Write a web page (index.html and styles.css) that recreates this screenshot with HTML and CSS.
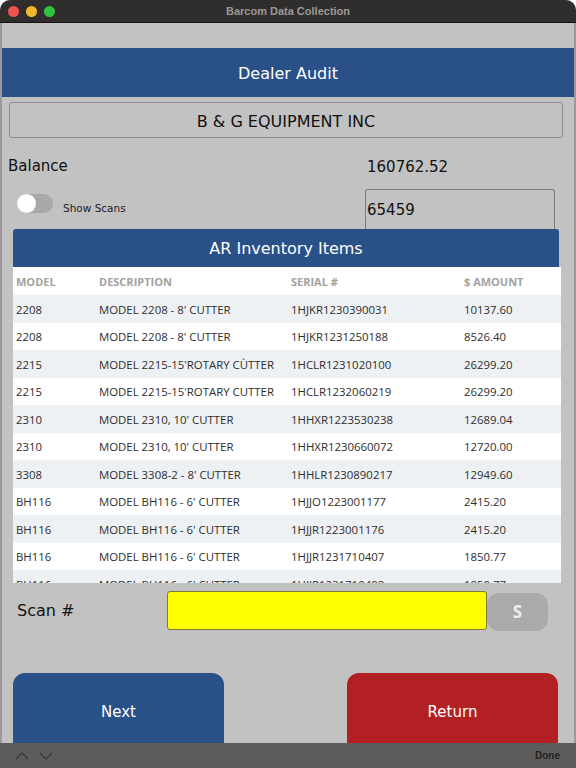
FILE: index.html
```
<!DOCTYPE html>
<html lang="en">
<head>
  <meta charset="UTF-8">
  <meta name="viewport" content="width=device-width, initial-scale=1.0">
  <title>Barcom Data Collection</title>
  <link rel="stylesheet" href="styles.css">
</head>
<body>

<div class="window">
  <div class="titlebar">
    <div class="lights">
      <span class="light red"></span>
      <span class="light yellow"></span>
      <span class="light green"></span>
    </div>
    <div class="title">Barcom Data Collection</div>
  </div>

  <div class="content">
    <div class="header">Dealer Audit</div>
    <div class="company">B &amp; G EQUIPMENT INC</div>

    <div class="info">
      <div class="balance-label">Balance</div>
      <div class="balance-value">160762.52</div>
      <div class="scans">
        <span class="toggle"><span class="knob"></span></span>
        <span class="scans-label">Show Scans</span>
      </div>
      <div class="count-box">65459</div>
    </div>

    <div class="card">
      <div class="card-title">AR Inventory Items</div>
      <div class="table">
        <div class="row head"><span>MODEL</span><span>DESCRIPTION</span><span>SERIAL #</span><span>$ AMOUNT</span></div>
        <div class="row"><span>2208</span><span>MODEL 2208 - 8' CUTTER</span><span>1HJKR1230390031</span><span>10137.60</span></div>
        <div class="row"><span>2208</span><span>MODEL 2208 - 8' CUTTER</span><span>1HJKR1231250188</span><span>8526.40</span></div>
        <div class="row"><span>2215</span><span>MODEL 2215-15'ROTARY CÙTTER</span><span>1HCLR1231020100</span><span>26299.20</span></div>
        <div class="row"><span>2215</span><span>MODEL 2215-15'ROTARY CUTTER</span><span>1HCLR1232060219</span><span>26299.20</span></div>
        <div class="row"><span>2310</span><span>MODEL 2310, 10' CUTTER</span><span>1HHXR1223530238</span><span>12689.04</span></div>
        <div class="row"><span>2310</span><span>MODEL 2310, 10' CUTTER</span><span>1HHXR1230660072</span><span>12720.00</span></div>
        <div class="row"><span>3308</span><span>MODEL 3308-2 - 8' CUTTER</span><span>1HHLR1230890217</span><span>12949.60</span></div>
        <div class="row"><span>BH116</span><span>MODEL BH116 - 6' CUTTER</span><span>1HJJO1223001177</span><span>2415.20</span></div>
        <div class="row"><span>BH116</span><span>MODEL BH116 - 6' CUTTER</span><span>1HJJR1223001176</span><span>2415.20</span></div>
        <div class="row"><span>BH116</span><span>MODEL BH116 - 6' CUTTER</span><span>1HJJR1231710407</span><span>1850.77</span></div>
        <div class="row"><span>BH116</span><span>MODEL BH116 - 6' CUTTER</span><span>1HJJR1231710408</span><span>1850.77</span></div>
      </div>
    </div>

    <div class="scan-row">
      <label class="scan-label">Scan #</label>
      <div class="scan-input"></div>
      <button class="scan-btn">S</button>
    </div>

    <div class="actions">
      <button class="big-btn next">Next</button>
      <button class="big-btn return">Return</button>
    </div>
  </div>

  <div class="toolbar">
    <div class="arrows">
      <svg width="16" height="10" viewBox="0 0 16 10"><path d="M2 8 L8 2 L14 8" fill="none" stroke="#3a3938" stroke-width="1.4"/></svg>
      <svg width="16" height="10" viewBox="0 0 16 10"><path d="M2 2 L8 8 L14 2" fill="none" stroke="#3a3938" stroke-width="1.4"/></svg>
    </div>
    <span class="done">Done</span>
  </div>
</div>

</body>
</html>
```

FILE: styles.css
```
body { margin: 0; background: #ffffff; font-family: "DejaVu Sans", Verdana, sans-serif; }
.window { width: 576px; height: 768px; display: flex; flex-direction: column; background-color: #c2c2c2; border-radius: 10px 10px 0 0; overflow: hidden; }

.titlebar { height: 22px; background-color: #302e2d; border-bottom: 1px solid #161514; display: flex; align-items: center; position: relative; }
.lights { display: flex; gap: 7px; padding-left: 8px; }
.light { width: 11px; height: 11px; border-radius: 50%; display: block; }
.light.red { background-color: #f0534f; }
.light.yellow { background-color: #f4b72c; }
.light.green { background-color: #2fc440; }
.title { position: absolute; left: 0; right: 0; text-align: center; font-family: "Liberation Sans", Arial, sans-serif; font-weight: bold; font-size: 11px; color: #9c9998; }

.content { flex: 1; display: flex; flex-direction: column; border-left: 2px solid #9a9a9a; border-right: 2px solid #9a9a9a; padding-top: 25px; overflow: hidden; }

.header { height: 49px; background-color: #2a5088; color: #ffffff; font-size: 16px; display: flex; align-items: center; justify-content: center; margin: 0 -2px; border-radius: 3px 3px 0 0; padding-top: 2px; box-sizing: border-box; }
.company { height: 37px; margin: 5px 11px 0 7px; border: 1px solid #8c8c8c; border-radius: 3px; display: flex; align-items: center; justify-content: center; font-size: 16px; color: #111111; padding-top: 2px; box-sizing: border-box; }

.info { display: grid; grid-template-columns: 357px 190px; margin-top: 17px; padding-left: 6px; }
.balance-label { font-size: 15px; color: #111111; padding-top: 2px; height: 19px; }
.balance-value { font-size: 15px; color: #111111; padding-top: 3px; padding-left: 2px; }
.scans { display: flex; align-items: flex-start; gap: 10px; padding-left: 9px; padding-top: 18px; }
.toggle { width: 36px; height: 19px; border-radius: 10px; background-color: #a9a9a9; position: relative; display: block; }
.knob { position: absolute; left: 0; top: 0; width: 19px; height: 19px; border-radius: 50%; background-color: #ffffff; }
.scans-label { font-size: 10.5px; color: #1c1c1c; padding-top: 8px; }
.count-box { margin-top: 13px; height: 39px; border: 1px solid #7c7c7c; border-bottom: none; border-radius: 3px 3px 0 0; font-size: 15px; color: #111111; display: flex; align-items: center; padding-left: 1px; }

.card { margin: 0 15px 0 11px; display: flex; flex-direction: column; }
.card-title { height: 38px; background-color: #2a5088; color: #ffffff; font-size: 16px; display: flex; align-items: center; justify-content: center; border-radius: 3px 3px 0 0; }
.table { height: 316px; overflow: hidden; background-color: #ffffff; margin-right: -2px; }
.row { display: grid; grid-template-columns: 83px 192px 173px 1fr; height: 27.5px; align-items: center; padding-left: 3px; font-family: "Open Sans", sans-serif; font-size: 11.4px; color: #2e2e2e; }
.row:nth-child(even) { background-color: #eef1f4; }
.row.head { height: 28px; font-weight: bold; color: #a2a2a2; font-size: 11px; }

.scan-row { display: flex; align-items: center; height: 40px; margin-top: 7px; padding-left: 15px; }
.scan-label { width: 150px; font-size: 16px; color: #111111; }
.scan-input { width: 318px; height: 37px; background-color: #ffff00; border: 1px solid #7d7a3a; border-radius: 3px; }
.scan-btn { width: 61px; height: 38px; margin-top: 3px; border: none; border-radius: 12px; background-color: #aaaaaa; color: #eeeeee; font-family: "Open Sans", sans-serif; font-weight: bold; font-size: 17px; }

.actions { display: flex; justify-content: space-between; margin: 43px 16px 0 11px; height: 70px; overflow: hidden; }
.big-btn { width: 211px; height: 84px; border: none; border-radius: 12px; color: #ffffff; font-family: "DejaVu Sans", sans-serif; font-size: 15px; padding-bottom: 8px; }
.big-btn.next { background-color: #2a5088; }
.big-btn.return { background-color: #b32024; }

.toolbar { height: 25px; background-color: #5e5c5b; display: flex; align-items: center; justify-content: space-between; padding: 0 16px 0 14px; }
.arrows { display: flex; gap: 8px; }
.done { font-family: "Liberation Sans", Arial, sans-serif; font-weight: bold; font-size: 10px; color: #222222; }
```
